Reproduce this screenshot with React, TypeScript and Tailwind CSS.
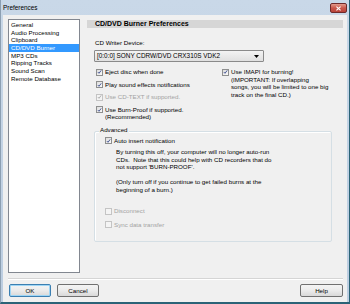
import React from "react";

const font = { fontFamily: '"Liberation Sans", Arial, sans-serif' };

function Check({ checked = false, disabled = false }: { checked?: boolean; disabled?: boolean }) {
  return (
    <span
      className={`flex h-[7px] w-[7px] shrink-0 items-center justify-center border ${
        disabled ? "border-[#c4c4c4] bg-[#f4f4f4]" : "border-[#8e8f8f] bg-gradient-to-br from-[#dcdcdc] to-[#fbfbfb]"
      }`}
    >
      {checked && (
        <svg viewBox="0 0 7 7" className="h-[6px] w-[6px]">
          <path
            d="M1.2 3.6 L2.8 5.3 L5.9 1.2"
            fill="none"
            stroke={disabled ? "#a8a8a8" : "#3b4d8f"}
            strokeWidth="1.3"
          />
        </svg>
      )}
    </span>
  );
}

function CheckRow({
  checked,
  disabled,
  lines,
}: {
  checked?: boolean;
  disabled?: boolean;
  lines: string[];
}) {
  return (
    <div className="flex items-start gap-[2px]">
      <div className="flex h-[8px] items-center">
        <Check checked={checked} disabled={disabled} />
      </div>
      <div className={disabled ? "text-[#a3a3a3]" : "text-black"}>
        {lines.map((l) => (
          <div key={l} className="h-[7.7px] whitespace-nowrap leading-[8px]">
            {l}
          </div>
        ))}
      </div>
    </div>
  );
}

function Button({ label, primary = false, width }: { label: string; primary?: boolean; width: string }) {
  return (
    <div
      className={`flex h-[13px] ${width} items-center justify-center rounded-[2px] border bg-gradient-to-b from-[#f4f4f4] via-[#ebebeb] to-[#d9d9d9] text-black ${
        primary ? "border-[#3c7fb1] shadow-[inset_0_0_0_1px_#9fd6f5]" : "border-[#707070]"
      }`}
    >
      {label}
    </div>
  );
}

const pages = [
  "General",
  "Audio Processing",
  "Clipboard",
  "CD/DVD Burner",
  "MP3 CDs",
  "Ripping Tracks",
  "Sound Scan",
  "Remote Database",
];

export default function App() {
  return (
    <div
      style={font}
      className="flex h-[304px] w-[350px] flex-col overflow-hidden border-b-[2px] border-r border-l border-b-[#2b6377] border-r-[#2b6377] border-l-[#8c9fb2] bg-gradient-to-b from-[#c9d8e8] to-[#bccde0] text-[6.2px]"
    >
      {/* title bar */}
      <div className="flex h-[15px] shrink-0 items-start justify-between pl-[2px] pr-[2px]">
        <span className="mt-[3px] text-[6.4px] text-black">Preferences</span>
        <div className="mt-[3px] flex h-[10px] w-[17px] items-center justify-center rounded-[2px] border border-[#6e2a2a] bg-gradient-to-b from-[#e29a8c] via-[#c9564a] to-[#b8443a]">
          <svg viewBox="0 0 8 6" className="h-[5px] w-[7px]">
            <path d="M1.5 0.8 L6.5 5.2 M6.5 0.8 L1.5 5.2" stroke="white" strokeWidth="1.4" />
          </svg>
        </div>
      </div>

      {/* body */}
      <div className="ml-[2px] mr-[2px] flex flex-1 flex-col bg-[#f0f0f0]">
        <div className="flex pl-[5px] pt-[4px]">
          {/* page list */}
          <div className="h-[254px] w-[72px] border border-[#828790] bg-white pt-[1px]">
            {pages.map((p) => (
              <div
                key={p}
                className={`h-[7.67px] whitespace-nowrap pl-[2px] leading-[7.67px] ${
                  p === "CD/DVD Burner" ? "bg-[#3399ff] text-white" : "text-black"
                }`}
              >
                {p}
              </div>
            ))}
          </div>

          {/* settings panel */}
          <div className="ml-[7px] flex w-[256px] flex-col">
            <div className="mt-[1px] flex h-[8px] items-center bg-[#d6d6d6] pl-[8px] text-[7px] font-bold">
              CD/DVD Burner Preferences
            </div>

            <div className="mt-[11px] pl-[8px] leading-[8px]">CD Writer Device:</div>
            <div className="ml-[7px] mt-[3px] flex h-[12px] w-[170px] items-center justify-between rounded-[1px] border border-[#8a8a8a] bg-gradient-to-b from-[#f3f3f3] to-[#e0e0e0] pl-[2px] pr-[4px]">
              <span className="whitespace-nowrap text-[6.4px]">[0:0:0] SONY CDRW/DVD CRX310S VDK2</span>
              <svg viewBox="0 0 5 3" className="h-[3px] w-[5px]">
                <path d="M0 0 H5 L2.5 3 Z" fill="#000" />
              </svg>
            </div>

            <div className="mt-[6px] flex pl-[9px]">
              <div className="flex w-[126px] flex-col gap-[4.5px]">
                <CheckRow checked lines={["Eject disc when done"]} />
                <CheckRow checked lines={["Play sound effects notifications"]} />
                <CheckRow checked disabled lines={["Use CD-TEXT if supported."]} />
                <CheckRow checked lines={["Use Burn-Proof if supported.", "(Recommended)"]} />
              </div>
              <div>
                <CheckRow
                  checked
                  lines={[
                    "Use IMAPI for burning!",
                    "(IMPORTANT: If overlapping",
                    "songs, you will be limited to one big",
                    "track on the final CD.)",
                  ]}
                />
              </div>
            </div>

            {/* advanced group */}
            <div className="relative ml-[7px] mt-[10px] h-[111px] w-[238px] rounded-[2px] border border-[#d5dfe5] shadow-[inset_1px_1px_0_white]">
              <span className="absolute -top-[6px] left-[4px] bg-[#f0f0f0] px-[1px] leading-[8px]">Advanced</span>
              <div className="pl-[10px] pt-[5px]">
                <CheckRow checked lines={["Auto insert notification"]} />
              </div>
              <div className="ml-[21px] mt-[3px] leading-[7.8px]">
                <div className="whitespace-nowrap">By turning this off, your computer will no longer auto-run</div>
                <div className="whitespace-nowrap">CDs.&nbsp; Note that this could help with CD recorders that do</div>
                <div className="whitespace-nowrap">not support 'BURN-PROOF'.</div>
                <div className="mt-[6.5px] whitespace-nowrap">
                  (Only turn off if you continue to get failed burns at the
                </div>
                <div className="whitespace-nowrap">beginning of a burn.)</div>
              </div>
              <div className="mt-[14px] flex flex-col gap-[5.3px] pl-[10px]">
                <CheckRow disabled lines={["Disconnect"]} />
                <CheckRow disabled lines={["Sync data transfer"]} />
              </div>
            </div>
          </div>
        </div>

        {/* separator */}
        <div className="ml-[5px] mt-[5px] h-[2px] w-[335px] border-t border-b border-t-[#d5d5d5] border-b-white" />

        {/* buttons */}
        <div className="mt-[4px] flex pl-[6px] pr-[4px]">
          <Button label="OK" primary width="w-[42px]" />
          <div className="ml-[6px]">
            <Button label="Cancel" width="w-[42px]" />
          </div>
          <div className="ml-auto">
            <Button label="Help" width="w-[43px]" />
          </div>
        </div>
      </div>
    </div>
  );
}
